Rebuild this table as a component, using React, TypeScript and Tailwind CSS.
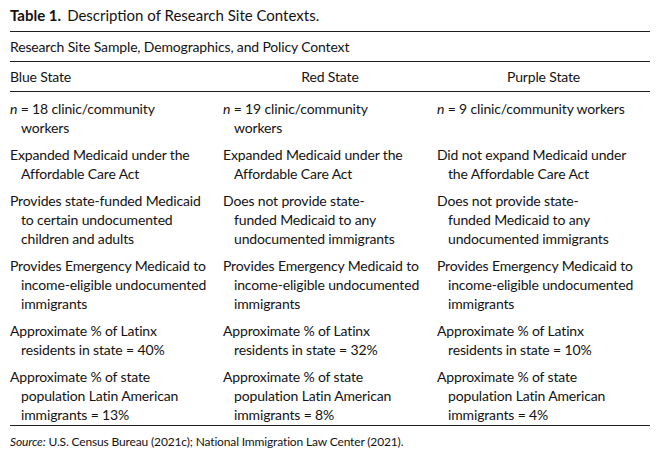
const rows: string[][][] = [
  [
    ['n = 18 clinic/community', 'workers'],
    ['n = 19 clinic/community', 'workers'],
    ['n = 9 clinic/community workers'],
  ],
  [
    ['Expanded Medicaid under the', 'Affordable Care Act'],
    ['Expanded Medicaid under the', 'Affordable Care Act'],
    ['Did not expand Medicaid under', 'the Affordable Care Act'],
  ],
  [
    ['Provides state-funded Medicaid', 'to certain undocumented', 'children and adults'],
    ['Does not provide state-', 'funded Medicaid to any', 'undocumented immigrants'],
    ['Does not provide state-', 'funded Medicaid to any', 'undocumented immigrants'],
  ],
  [
    ['Provides Emergency Medicaid to', 'income-eligible undocumented', 'immigrants'],
    ['Provides Emergency Medicaid to', 'income-eligible undocumented', 'immigrants'],
    ['Provides Emergency Medicaid to', 'income-eligible undocumented', 'immigrants'],
  ],
  [
    ['Approximate % of Latinx', 'residents in state = 40%'],
    ['Approximate % of Latinx', 'residents in state = 32%'],
    ['Approximate % of Latinx', 'residents in state = 10%'],
  ],
  [
    ['Approximate % of state', 'population Latin American', 'immigrants = 13%'],
    ['Approximate % of state', 'population Latin American', 'immigrants = 8%'],
    ['Approximate % of state', 'population Latin American', 'immigrants = 4%'],
  ],
]

function Cell({ lines }: { lines: string[] }) {
  return (
    <div className="whitespace-nowrap">
      {lines.map((l, i) => {
        const italicN = l.startsWith('n = ')
        return (
          <div key={i} className={i > 0 ? 'pl-[11px]' : ''}>
            {italicN ? (
              <>
                <i>n</i>
                {l.slice(1)}
              </>
            ) : (
              l
            )}
          </div>
        )
      })}
    </div>
  )
}

export default function App() {
  return (
    <div className="w-[660px] h-[460px] bg-white text-[#141213] font-['Lato','Open_Sans',sans-serif] text-[14px] leading-[19px] tracking-[-0.15px]">
      <div className="px-[10px] pt-[6px]">
        {/* Caption */}
        <div className="h-[25px] text-[15px] leading-[18px] tracking-normal">
          <span className="font-bold">Table 1.</span>
          <span className="ml-[6px]">Description of Research Site Contexts.</span>
        </div>

        <div className="border-t border-[#231f20] h-[30px] flex items-center">
          Research Site Sample, Demographics, and Policy Context
        </div>

        <div className="border-t border-[#231f20] h-[30px] grid grid-cols-[213px_214px_1fr] items-center">
          <div>Blue State</div>
          <div className="text-center">Red State</div>
          <div className="text-center">Purple State</div>
        </div>

        <div className="border-t border-[#231f20] pt-[7px] pb-[1px] flex flex-col gap-[8px]">
          {rows.map((r, i) => (
            <div key={i} className="grid grid-cols-[213px_214px_1fr]">
              {r.map((c, j) => (
                <Cell key={j} lines={c} />
              ))}
            </div>
          ))}
        </div>

        <div className="border-t border-[#231f20] pt-[8px] text-[12px] leading-[16px]">
          <i>Source:</i> U.S. Census Bureau (2021c); National Immigration Law Center (2021).
        </div>
      </div>
    </div>
  )
}
